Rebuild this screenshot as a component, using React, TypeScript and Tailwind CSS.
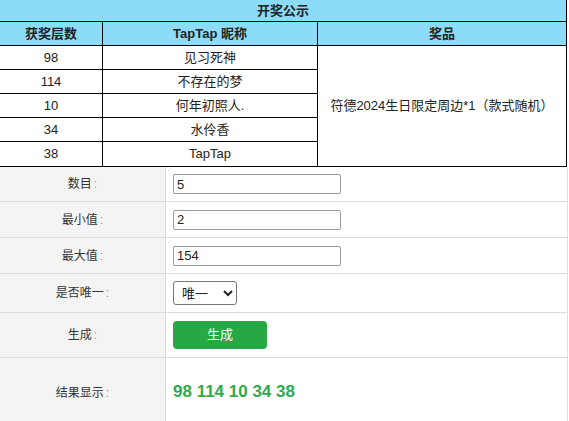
import React from "react";

const winners = [
  { floor: "98", name: "见习死神" },
  { floor: "114", name: "不存在的梦" },
  { floor: "10", name: "何年初照人." },
  { floor: "34", name: "水伶香" },
  { floor: "38", name: "TapTap" },
];

function FormRow({ label, h, children }: { label: string; h: string; children: React.ReactNode }) {
  return (
    <div className={`flex border-b border-[#dcdcdc] ${h}`}>
      <div className="w-[166px] shrink-0 bg-[#f4f4f4] border-r border-[#dcdcdc] flex items-center justify-center text-[12px] text-[#333]">
        {label}
        <span className="text-[#999] ml-[2px]">:</span>
      </div>
      <div className="flex-1 flex items-center pl-[7px]">{children}</div>
    </div>
  );
}

export default function App() {
  return (
    <div
      className="w-[569px] h-[421px] overflow-hidden bg-white text-[#222]"
      style={{ fontFamily: '"Liberation Sans", "Noto Sans CJK SC", sans-serif' }}
    >
      {/* ── 开奖公示 ── */}
      <div className="w-[567px] border-r border-black">
        <div className="h-[22px] bg-[#8cdbf8] border-b border-black flex items-center justify-center font-bold text-[13px]">
          开奖公示
        </div>
        <div className="flex h-[24px] bg-[#8cdbf8] border-b border-black font-bold text-[13px]">
          <div className="w-[103px] border-r border-black flex items-center justify-center">获奖层数</div>
          <div className="w-[215px] border-r border-black flex items-center justify-center">TapTap 昵称</div>
          <div className="flex-1 flex items-center justify-center">奖品</div>
        </div>
        <div className="flex border-b border-black text-[13px]">
          <div className="w-[318px]">
            {winners.map((w, i) => (
              <div key={i} className={`flex h-[24px] ${i < winners.length - 1 ? "border-b border-black" : ""}`}>
                <div className="w-[103px] border-r border-black flex items-center justify-center">{w.floor}</div>
                <div className="w-[215px] border-r border-black flex items-center justify-center">{w.name}</div>
              </div>
            ))}
          </div>
          <div className="flex-1 flex items-center justify-center">符德2024生日限定周边*1（款式随机）</div>
        </div>
      </div>

      {/* ── 随机数生成 ── */}
      <div className="w-[568px] border-r border-[#dcdcdc]">
        <FormRow label="数目" h="h-[35px]">
          <input defaultValue="5" className="w-[168px] h-[20px] border border-[#999] rounded-[2px] px-[3px] text-[13px] outline-none" />
        </FormRow>
        <FormRow label="最小值" h="h-[36px]">
          <input defaultValue="2" className="w-[168px] h-[20px] border border-[#999] rounded-[2px] px-[3px] text-[13px] outline-none" />
        </FormRow>
        <FormRow label="最大值" h="h-[36px]">
          <input defaultValue="154" className="w-[168px] h-[20px] border border-[#999] rounded-[2px] px-[3px] text-[13px] outline-none" />
        </FormRow>
        <FormRow label="是否唯一" h="h-[39px]">
          <select defaultValue="唯一" className="w-[64px] h-[24px] border border-[#767676] rounded-[3px] text-[13px] pl-[4px] bg-white">
            <option>唯一</option>
            <option>不唯一</option>
          </select>
        </FormRow>
        <FormRow label="生成" h="h-[45px]">
          <button className="w-[94px] h-[28px] rounded-[4px] bg-[#28a745] text-white text-[13px]">生成</button>
        </FormRow>
        <div className="flex h-[70px]">
          <div className="w-[166px] shrink-0 bg-[#f4f4f4] border-r border-[#dcdcdc] flex items-center justify-center text-[12px] text-[#333]">
            结果显示
            <span className="text-[#999] ml-[2px]">:</span>
          </div>
          <div className="flex-1 flex items-center pl-[7px] pb-[3px] text-[17px] font-bold text-[#2eaa4f]">98 114 10 34 38</div>
        </div>
      </div>
    </div>
  );
}
